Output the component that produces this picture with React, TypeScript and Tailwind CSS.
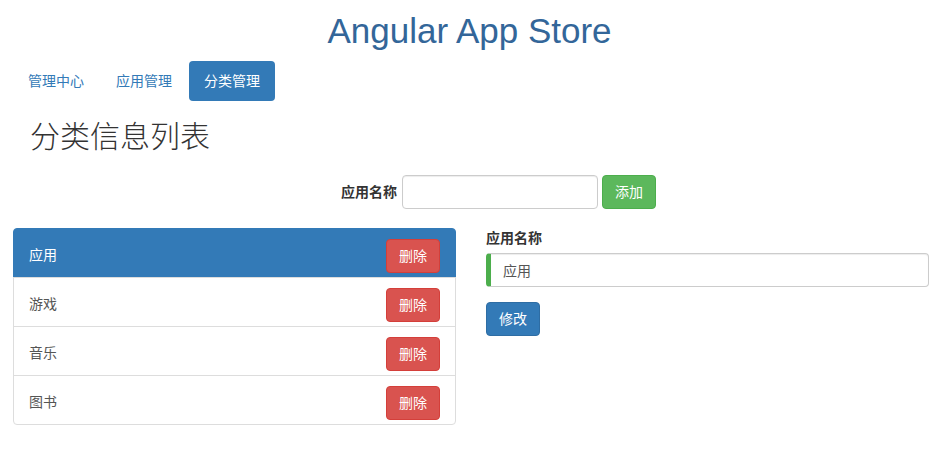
export default function App() {
  const cats = ["应用", "游戏", "音乐", "图书"];
  const font = "font-['Liberation_Sans','Noto_Sans_CJK_SC',sans-serif]";
  return (
    <div className={`${font} w-[939px] h-[450px] bg-white text-[14px] leading-[20px] text-[#333]`}>
      <h1 className="pt-[11px] text-center text-[35px] leading-[40px] text-[#336699]">
        Angular App Store
      </h1>

      <nav className="mt-[10px] ml-[13px] flex gap-[2px]">
        {["管理中心", "应用管理", "分类管理"].map((label, i) => (
          <a
            key={label}
            className={`rounded-[4px] px-[15px] py-[10px] ${
              i === 2 ? "bg-[#337ab7] text-white" : "text-[#337ab7]"
            }`}
          >
            {label}
          </a>
        ))}
      </nav>

      <h2 className="mt-[19px] ml-[30px] text-[30px] leading-[33px] font-light text-[#333]">分类信息列表</h2>

      <div className="mt-[22px] flex items-center justify-center pl-[58px]">
        <label className="mr-[5px] font-bold">应用名称</label>
        <input className="h-[34px] w-[196px] rounded-[4px] border border-[#ccc] px-[12px] shadow-[inset_0_1px_1px_rgba(0,0,0,0.075)] outline-none" />
        <button className="ml-[4px] h-[34px] rounded-[4px] border border-[#4cae4c] bg-[#5cb85c] px-[12px] text-white">
          添加
        </button>
      </div>

      <div className="mt-[19px] ml-[13px] flex gap-[30px]">
        <div className="w-[443px]">
          {cats.map((c, i) => (
            <div
              key={c}
              className={`flex h-[50px] items-start justify-between border px-[15px] pt-[10px] ${
                i === 0
                  ? "rounded-t-[4px] border-[#337ab7] bg-[#337ab7] text-white"
                  : "-mt-px border-[#ddd] text-[#555]"
              } ${i === cats.length - 1 ? "rounded-b-[4px]" : ""}`}
            >
              <span className="pt-[6px]">{c}</span>
              <button className="h-[34px] rounded-[4px] border border-[#d43f3a] bg-[#d9534f] px-[12px] text-white">
                删除
              </button>
            </div>
          ))}
        </div>

        <div className="w-[443px]">
          <label className="mb-[5px] block font-bold">应用名称</label>
          <input
            defaultValue="应用"
            className="h-[34px] w-full rounded-[4px] border border-l-[5px] border-[#ccc] border-l-[#4cae4c] px-[12px] text-[#555] shadow-[inset_0_1px_1px_rgba(0,0,0,0.075)] outline-none"
          />
          <button className="mt-[15px] h-[34px] rounded-[4px] border border-[#2e6da4] bg-[#337ab7] px-[12px] text-white">
            修改
          </button>
        </div>
      </div>
    </div>
  );
}
